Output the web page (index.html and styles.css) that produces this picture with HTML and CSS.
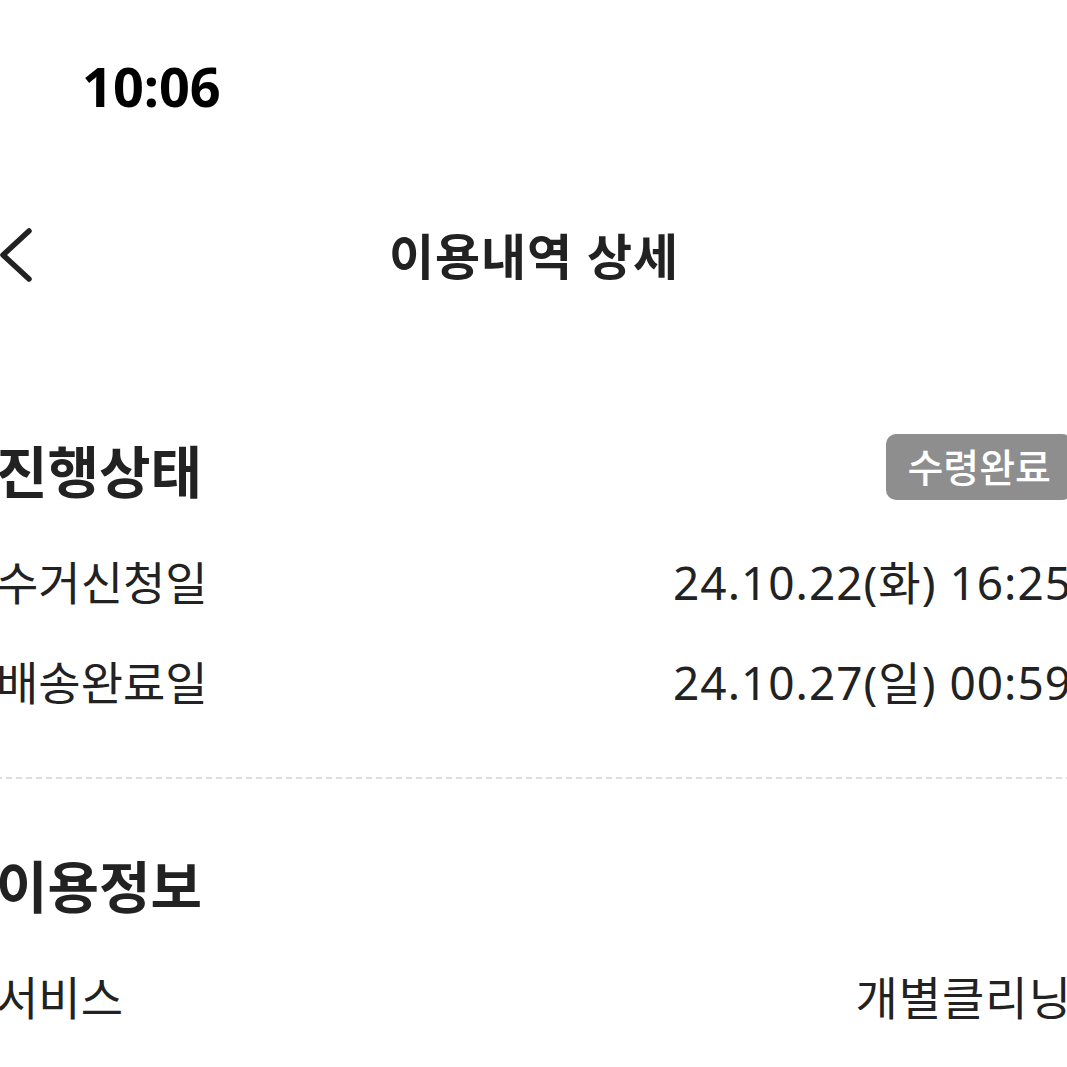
FILE: index.html
```html
<!DOCTYPE html>
<html lang="ko">
<head>
    <meta charset="UTF-8">
    <title>이용내역 상세</title>
    <link rel="stylesheet" href="styles.css">
</head>
<body>
    <div class="page">
        <div class="status-bar">10:06</div>

        <div class="nav">
            <div class="nav-back">
                <svg width="40" height="60" viewBox="0 0 40 60">
                    <polyline points="33,6 7,30 33,54" fill="none" stroke="#222" stroke-width="5.5" stroke-linecap="round" stroke-linejoin="round"/>
                </svg>
            </div>
            <div class="nav-title">이용내역 상세</div>
            <div class="nav-side"></div>
        </div>

        <div class="section">
            <div class="section-head">
                <h2>진행상태</h2>
                <span class="badge">수령완료</span>
            </div>
            <div class="row">
                <span class="label">수거신청일</span>
                <span class="value">24.10.22(화) 16:25</span>
            </div>
            <div class="row">
                <span class="label">배송완료일</span>
                <span class="value">24.10.27(일) 00:59</span>
            </div>
        </div>

        <div class="divider"></div>

        <div class="section section-info">
            <div class="section-head">
                <h2>이용정보</h2>
            </div>
            <div class="row">
                <span class="label">서비스</span>
                <span class="value">개별클리닝</span>
            </div>
        </div>
    </div>
</body>
</html>
```

FILE: styles.css
```css
body {
    margin: 0;
    padding: 0;
    background: #fff;
    overflow: hidden;
    font-family: "Noto Sans", "Noto Sans CJK KR", sans-serif;
    color: #222;
}

.page {
    width: 1076px;
    margin-top: -4px;
    margin-left: -4px;
}

.status-bar {
    height: 180px;
    line-height: 180px;
    padding-left: 86px;
    font-size: 54px;
    font-weight: 700;
    color: #000;
}

.nav {
    height: 154px;
    display: flex;
    align-items: center;
}

.nav-back,
.nav-side {
    width: 60px;
    display: flex;
    align-items: center;
}

.nav-back svg {
    display: block;
    margin-top: 4px;
}

.nav-title {
    flex: 1;
    text-align: center;
    font-size: 49px;
    font-weight: 700;
    letter-spacing: 1px;
}

.section {
    padding-top: 93px;
}

.section-info {
    padding-top: 59px;
}

.section-head {
    height: 90px;
    display: flex;
    align-items: center;
    justify-content: space-between;
    margin-bottom: 17px;
}

.section-head h2 {
    margin: 0;
    font-size: 56px;
    font-weight: 700;
}

.badge {
    height: 66px;
    line-height: 66px;
    padding: 0 21px;
    margin-top: -2px;
    border-radius: 10px;
    background: #8e8e8e;
    color: #fff;
    font-size: 39px;
    font-weight: 500;
}

.row {
    height: 100px;
    display: flex;
    align-items: center;
    justify-content: space-between;
    font-size: 46px;
}

.row .value {
    letter-spacing: 1px;
}

.divider {
    margin-top: 47px;
    border-top: 2px dashed #ddd;
}
```
